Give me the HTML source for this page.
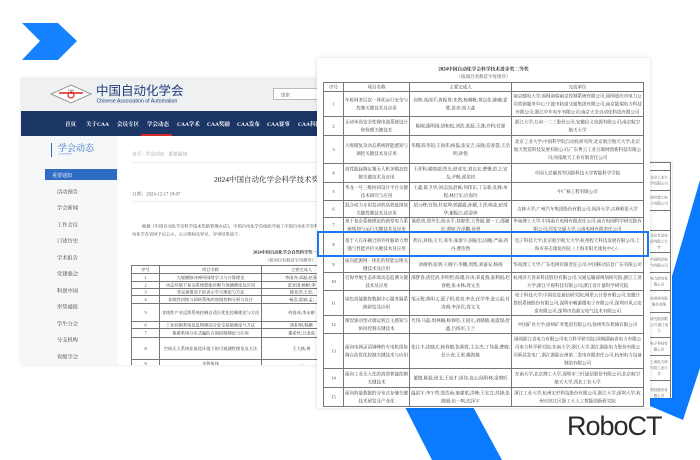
<!DOCTYPE html>
<html><head><meta charset="utf-8"><style>
*{margin:0;padding:0;box-sizing:border-box}
body{width:700px;height:460px;overflow:hidden;background:#fff;position:relative;font-family:"Liberation Serif","Noto Serif CJK SC",serif;color:#333}
.abs{position:absolute}
.cjk{font-family:"Liberation Sans","Noto Sans CJK SC",sans-serif}
.sc{transform:scale(.5);transform-origin:0 0}
#left{left:21px;top:78px;width:600px;height:574px;background:#fff;overflow:hidden;box-shadow:0 0 6px rgba(0,0,0,.12)}
.nav span{position:absolute;top:18px;font-size:11px;color:#fff;font-weight:bold;white-space:nowrap}
.side{position:absolute;left:0;top:116px;width:194px;height:458px;background:#f6f7f9}
.side div{position:absolute;left:72px;font-size:10.5px;color:#333}
.t{position:absolute;border-left:2px solid #777;border-top:2px solid #777}
.r{display:grid}
.r>div{border-right:2px solid #777;border-bottom:2px solid #777;overflow:hidden;display:flex;align-items:center;justify-content:center;text-align:center;font-size:9px;line-height:16px;padding:0 2px;color:#333}
.rt .r{grid-template-columns:40px 132px 204px 264px}
.lt .r{grid-template-columns:56px 204px 160px}
.lt .r>div{font-size:8.5px;line-height:14px}
.tt .r{grid-template-columns:46px}
.tt .r>div{font-size:7px;line-height:12px;color:#555}
</style></head><body>
<svg class="abs" style="left:0;top:0" width="700" height="460">
<polygon points="22,23 58,23 77,41 58,60 22,60 40,41" fill="#1682ff"/>
<polygon points="700,180 636,400 683,420 700,368" fill="#0a7bff"/>
<polygon points="404,405 472,405 502,460 432,460" fill="#0a7bff"/>
</svg>

<div id="left" class="abs sc">
 <div class="abs" style="left:0;top:0;width:600px;height:66px;background:#eff0f2"></div>
 <svg class="abs" style="left:58px;top:12px" width="84" height="40"><polygon points="42,2 82,20 42,38 2,20" fill="#fff" stroke="#999" stroke-width="2"/><line x1="18" y1="18" x2="66" y2="18" stroke="#d22" stroke-width="3"/><circle cx="42" cy="22" r="6" fill="none" stroke="#d22" stroke-width="2.4"/><text x="42" y="14" font-size="6" text-anchor="middle" fill="#333">CAA</text></svg>
 <div class="abs cjk" style="left:150px;top:6px;font-size:25px;color:#1d3a78;white-space:nowrap">中国自动化学会</div>
 <div class="abs cjk" style="left:151px;top:40px;font-size:10.5px;color:#1d3a78;white-space:nowrap">Chinese Association of Automation</div>
 <div class="abs cjk" style="left:504px;top:20px;width:120px;height:24px;background:#fff;border:2px solid #bbb;font-size:9px;color:#888;padding:5px 0 0 14px">搜索</div>
 <div class="abs nav" style="left:0;top:66px;width:600px;height:50px;background:#1b3565">
  <span style="left:88px">首页</span><span style="left:130px">关于CAA</span><span style="left:192px">会员专区</span><span style="left:252px">学会动态</span><span style="left:312px">CAA学术</span><span style="left:372px">CAA奖励</span><span style="left:432px">CAA发布</span><span style="left:492px">CAA赛事</span><span style="left:554px">CAA科技</span>
  <div class="abs" style="left:240px;top:46px;width:62px;height:4px;background:#d62a2a"></div>
 </div>
 <div class="side">
  <div class="abs" style="left:60px;top:14px;width:2px;height:28px;background:#2a6bc4"></div>
  <div style="left:74px;top:10px;font-size:18px;color:#2a6bc4">学会动态</div>
  <div style="left:74px;top:34px;font-size:5px;color:#2a6bc4">ACTIVITIES</div>
  <div class="abs" style="left:48px;top:66px;width:144px;height:22px;background:#2f6cc4"></div>
  <div style="left:62px;top:70px;color:#fff;font-size:10px">重要通知</div>
  <div style="top:104px">活动预告</div><div style="top:136px">学会新闻</div><div style="top:170px">工作会议</div><div style="top:202px">口述历史</div><div style="top:236px">学术报告</div><div style="top:268px">党建强会</div><div style="top:302px">科创中国</div><div style="top:334px">形势通报</div><div style="top:368px">学生分会</div><div style="top:400px">分支机构</div><div style="top:434px">省级学会</div>
 </div>
 <div class="abs" style="left:222px;top:144px;font-size:9.5px;color:#999">首页 · 学会动态 · 重要通知</div>
 <div class="abs" style="left:222px;top:168px;width:378px;height:2px;background:#eee"></div>
 <div class="abs" style="left:386px;top:192px;font-size:15px;color:#222;white-space:nowrap">2024中国自动化学会科学技术奖公示</div>
 <div class="abs" style="left:222px;top:224px;font-size:9.5px;color:#666">日期：2024-12-17 18:07</div>
 <div class="abs" style="left:222px;top:246px;width:378px;height:2px;background:#eee"></div>
 <div class="abs" style="left:242px;top:290px;font-size:8.5px;color:#444;white-space:nowrap">根据《中国自动化学会科学技术奖励管理办法》，中国自动化学会组织开展了中国自动化学会科学技术奖评选</div>
 <div class="abs" style="left:222px;top:306px;font-size:8.5px;color:#444;white-space:nowrap">动化学会官网予以公示，公示期间无异议，评审结果如下：</div>
 <div class="abs" style="left:464px;top:342px;font-size:8.5px;color:#222;font-weight:bold;white-space:nowrap">2024中国自动化学会自然科学奖一等奖</div>
 <div class="abs" style="left:488px;top:358px;font-size:8.5px;color:#444;white-space:nowrap">（按项目名称首字母排序）</div>
 <div class="t lt" style="left:220px;top:374px">
  <div class="r" style="height:16px"><div>序号</div><div>项目名称</div><div>主要完成人</div></div>
  <div class="r" style="height:16px"><div>1</div><div>大规模脉冲神经网络学习与计算理论</div><div>李国齐;邓磊;赵蓉;</div></div>
  <div class="r" style="height:14px"><div>2</div><div>动态环境下复杂系统智能诊断与预测理论及应用</div><div>雷亚国;杨彬;李</div></div>
  <div class="r" style="height:14px"><div>3</div><div>非完备情况下的表示学习理论与方法</div><div>韩亚洪;王忠;</div></div>
  <div class="r" style="height:16px"><div>4</div><div>非线性切换与网络系统的容错控制分析与设计</div><div>杨浩;姜斌;孟;</div></div>
  <div class="r" style="height:36px"><div>5</div><div>非线性产业反馈系统控制自适应优化控制理论与方法</div><div>侍贤成;李永彬</div></div>
  <div class="r" style="height:14px"><div>6</div><div>工业控制系统信息物理综合安全基础理论与方法</div><div>陈积明;程鹏</div></div>
  <div class="r" style="height:18px"><div>7</div><div>集群系统分布式编队合围控制理论与应用</div><div>董希旺;吕金虎</div></div>
  <div class="r" style="height:44px"><div>8</div><div>空间无人系统非最优环境下的可观测性理论及方法</div><div>王大轶;黄</div></div>
  <div class="r" style="height:16px"><div>9</div><div>多智能体</div><div>…</div></div>
 </div>
</div>

<div class="abs tt sc" style="left:646px;top:162px;width:52px;height:472px;background:#fff;box-shadow:0 0 4px rgba(0,0,0,.2);overflow:hidden">
 <div class="t" style="left:2px;top:0">
  <div class="r" style="height:16px"><div></div></div>
  <div class="r" style="height:40px"><div>北京工业大学有限公司</div></div>
  <div class="r" style="height:40px"><div>南京理工电子有限公司</div></div>
  <div class="r" style="height:40px"><div></div></div>
  <div class="r" style="height:44px"><div>北京自动化研究院工大学</div></div>
  <div class="r" style="height:40px"><div>中国海洋电气有限公司</div></div>
  <div class="r" style="height:36px"><div>电力研究有限公司</div></div>
  <div class="r" style="height:44px"><div>杭州研究院服务有限</div></div>
  <div class="r" style="height:50px"><div>研究院有限公司 浙江电力</div></div>
  <div class="r" style="height:36px"><div>电子科技有限公司</div></div>
  <div class="r" style="height:50px"><div>上海电力研究院工业大学</div></div>
  <div class="r" style="height:50px"><div>科技股份有限公司</div></div>
 </div>
</div>

<div class="abs sc" style="left:317px;top:58px;width:666px;height:700px;background:#fff;box-shadow:0 0 8px rgba(0,0,0,.15)">
 <div class="abs" style="left:0;width:666px;top:14px;text-align:center;font-size:9.5px;font-weight:bold;color:#222">2024中国自动化学会科学技术进步奖二等奖</div>
 <div class="abs" style="left:0;width:666px;top:30px;text-align:center;font-size:9px;color:#444">（按项目名称首字母排序）</div>
 <div class="t rt" style="left:12px;top:48px">
  <div class="r" style="height:18px"><div>序号</div><div>项目名称</div><div>主要完成人</div><div>完成单位</div></div>
  <div class="r" style="height:50px"><div>1</div><div>车桩网多层次一体化运行安全与控制关键技术及应用</div><div>高辉;高国平;唐振贤;朱然;杨晴帆;黄以佳;陈曦;霍胜;景亮;周大淼</div><div>南京邮电大学;国网南瑞南京控制系统有限公司;国网重庆市电力公司营销服务中心;宁波市轨道交通集团有限公司;南京能瑞电力科技有限公司;浙江中车电车有限公司;南京大全自动化科技有限公司</div></div>
  <div class="r" style="height:38px"><div>2</div><div>无动单高安全性锂电池系统设计和管理关键技术</div><div>陈刚;邵明国;胡和松;刘浩;张磊;王潇;许科;付源</div><div>浙江大学;万向一二三股份公司;安徽信义电源有限公司;南京航空航天大学</div></div>
  <div class="r" style="height:56px"><div>3</div><div>大规模复杂动态系统智能感知与调控关键技术及应用</div><div>华稷;陈孝超;王海伟;杨磊;张安吉;宋晓;信春慧;王浩明;孙悦</div><div>北京工业大学;中国科学院自动化研究所;北京航空航天大学;北京航天智造科技发展有限公司;广东粤云工业互联网创新科技有限公司;河南航天工业有限责任公司</div></div>
  <div class="r" style="height:38px"><div>4</div><div>高性能起降定翼无人机多模态控制关键技术及应用</div><div>王祥科;喻煌超;贺光;赵述龙;刘志宏;曹聚;彭之;安戈;尹帆;邱余钧</div><div>中国人民解放军国防科技大学智能科学学院</div></div>
  <div class="r" style="height:36px"><div>5</div><div>华龙一号三维协同设计平台关键技术研究与应用</div><div>王鑫;陈卫华;刘志国;赵栋;何伟东;丁志新;孔峰;单程;林巨军;应海玲</div><div>中广核工程有限公司</div></div>
  <div class="r" style="height:34px"><div>6</div><div>混合动力专用发动机高效低排放关键控制技术及应用</div><div>胡云峰;宫海;杜家坤;郭露露;孙耀;王萍;陈弦;赵靖华;谢振江;邱金铎</div><div>吉林大学;广州汽车集团股份有限公司;同济大学;吉林师范大学</div></div>
  <div class="r" style="height:30px"><div>7</div><div>基于复杂系统理论的新型电力系统规划与运行关键技术及应用</div><div>陈皓勇;郑外生;陈永平;刘俊荣;王秀丽;谢一工;邵晓东;谭琼;许泽鹏;孙勇</div><div>华南理工大学;中国南方电网有限责任公司;南方电网科学研究院有限公司;西安交通大学;云南电网有限责任公司</div></div>
  <div class="r" style="height:48px"><div>8</div><div>基于人在环耦合的外骨骼助力增强与性能评价关键技术及应用</div><div>黄瓦;刘扬;王天;邓冬;张康宇;国振宏;国舰;严焱;蒋丹;曹浩然</div><div>电子科技大学;北京航空航天大学;杭州程天科技发展有限公司;上海市养志康复医院（上海市阳光康复中心）</div></div>
  <div class="r" style="height:32px"><div>9</div><div>面向能源网一体化的智能运维关键技术及应用</div><div>刘俊明;张明;王晓宇;李鹏;周凯;刘嘉安;杨扬</div><div>华南理工大学;广东电网有限责任公司;中国移动信息广东有限公司</div></div>
  <div class="r" style="height:36px"><div>10</div><div>近海导航生态环境动态监测关键技术及应用</div><div>邵梦春;唐佳武;李明哲;陈瑾;许涛;邓夏燕;张利国;赵春艳;张永林;周文杰</div><div>杭州泽天春来科技股份有限公司;交通运输部规划研究院;浙江工业大学;浙江宇视科技有限公司;浙江省计量科学研究院</div></div>
  <div class="r" style="height:50px"><div>11</div><div>绿色高能数智数据中心服务器系统研发及应用</div><div>邹元程;黄明义;邵子恒;蒋亮;李忠;任学华;张云雷;付涛朗;李泽民;周文飞</div><div>电子科技大学;中国信息通信研究院;网里云计算有限公司;安徽计算机系统股份有限公司;深圳市畅游微电子有限公司;深圳市风云安泰有限公司;深圳市高新宝电气技术有限公司</div></div>
  <div class="r" style="height:36px"><div>12</div><div>煤炭驱动型式端运机自主感知与协同控制关键技术</div><div>代伟;马磊;周林楠;杨春哈;王国元;刘晓敏;张震瑞;舒鑫;吕海军;王兰</div><div>中国矿业大学;徐州矿务集团有限公司;徐州华东机械有限公司</div></div>
  <div class="r" style="height:70px"><div>13</div><div>面向电网灵活调峰的火电机组协调自治优化控制关键技术与应用</div><div>张江丰;沈晓兵;杨春敏;张新胜;王志杰;丁伟超;曹晓;任小虎;王軍;姚海燕</div><div>国网浙江省电力有限公司电力科学研究院;国网湖南省电力有限公司电力科学研究院;东南大学;浙江大学;浙江浙能电力股份有限公司新昌发电厂;浙江浙能台州第二发电有限责任公司;杭州电力设备制造有限公司</div></div>
  <div class="r" style="height:38px"><div>14</div><div>面向工业无人化的高效智能控制关键技术</div><div>董德;陈磊;徐戈;王成才;周伟;袁心;陆科林;金增旺</div><div>东南大学;北京理工大学;深圳市三旺通信股份有限公司;北京航空航天大学;西北工业大学</div></div>
  <div class="r" style="height:38px"><div>15</div><div>面向海量数据的分布式存储关键技术研发及产业化</div><div>温雷宇;李宇哲;詹浩南;秦建斌;洪峰;王宏宣;苏捷;张晓丽;伍一鸣;沈泽宇</div><div>浙江工业大学;杭州宏杉科技股份有限公司;浙江大学;深圳大学;杭州市滨江区浙工大人工智能创新研究院</div></div>
 </div>
</div>
<div class="abs" style="left:317px;top:231px;width:332px;height:26px;border:2px solid #1a78f0"></div>

<div class="abs cjk" style="left:567px;top:410px;font-size:27px;color:#2a2a2a;letter-spacing:-1px;line-height:32px">RoboCT</div>
</body></html>
